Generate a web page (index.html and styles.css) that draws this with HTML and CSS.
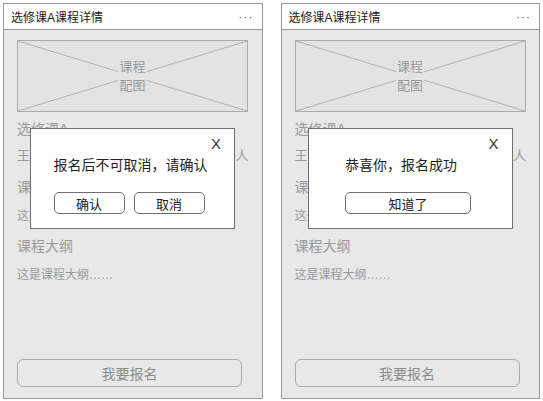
FILE: index.html
```html
<!DOCTYPE html>
<html lang="zh-CN">
<head>
    <meta charset="UTF-8">
    <meta name="viewport" content="width=device-width, initial-scale=1.0">
    <title>选修课A课程详情</title>
    <link rel="stylesheet" href="styles.css">
</head>
<body>
    <!-- Screen 1: confirm before enrolling -->
    <div class="phone">
        <div class="phone-header">
            <span class="phone-title">选修课A课程详情</span>
            <span class="phone-more">···</span>
        </div>
        <div class="phone-content">
            <div class="cover">
                <svg class="cover-cross" viewBox="0 0 229 70" preserveAspectRatio="none">
                    <line x1="0" y1="0" x2="229" y2="70"></line>
                    <line x1="229" y1="0" x2="0" y2="70"></line>
                </svg>
                <span class="cover-label">课程<br>配图</span>
            </div>
            <div class="course-name">选修课A</div>
            <div class="course-meta">
                <span>王老师</span>
                <span>已报名30人</span>
            </div>
            <div class="section-title">课程简介</div>
            <div class="section-text">这是课程简介……</div>
            <div class="section-title">课程大纲</div>
            <div class="section-text">这是课程大纲……</div>
            <div class="enroll-btn">我要报名</div>
        </div>

        <div class="dialog">
            <span class="dialog-close">X</span>
            <div class="dialog-body">
                <div class="dialog-group">
                    <p class="dialog-text">报名后不可取消，请确认</p>
                    <div class="dialog-actions">
                        <span class="dialog-btn">确认</span>
                        <span class="dialog-btn">取消</span>
                    </div>
                </div>
            </div>
        </div>
    </div>

    <!-- Screen 2: enroll succeeded -->
    <div class="phone">
        <div class="phone-header">
            <span class="phone-title">选修课A课程详情</span>
            <span class="phone-more">···</span>
        </div>
        <div class="phone-content">
            <div class="cover">
                <svg class="cover-cross" viewBox="0 0 229 70" preserveAspectRatio="none">
                    <line x1="0" y1="0" x2="229" y2="70"></line>
                    <line x1="229" y1="0" x2="0" y2="70"></line>
                </svg>
                <span class="cover-label">课程<br>配图</span>
            </div>
            <div class="course-name">选修课A</div>
            <div class="course-meta">
                <span>王老师</span>
                <span>已报名30人</span>
            </div>
            <div class="section-title">课程简介</div>
            <div class="section-text">这是课程简介……</div>
            <div class="section-title">课程大纲</div>
            <div class="section-text">这是课程大纲……</div>
            <div class="enroll-btn">我要报名</div>
        </div>

        <div class="dialog">
            <span class="dialog-close">X</span>
            <div class="dialog-body">
                <div class="dialog-group">
                    <p class="dialog-text">恭喜你，报名成功</p>
                    <div class="dialog-actions">
                        <span class="dialog-btn dialog-btn-wide">知道了</span>
                    </div>
                </div>
            </div>
        </div>
    </div>
</body>
</html>
```

FILE: styles.css
```css
/* Base */
* {
    margin: 0;
    padding: 0;
    box-sizing: border-box;
}

body {
    background-color: #ffffff;
    font-family: "Liberation Sans", "Noto Sans CJK SC", sans-serif;
    display: flex;
    gap: 18px;
    padding: 3px;
}

/* Phone frame */
.phone {
    position: relative;
    width: 260px;
    height: 396px;
    border: 1px solid #9a9a9a;
    background-color: #e8e8e8;
    display: flex;
    flex-direction: column;
}

.phone-header {
    height: 26px;
    background-color: #ffffff;
    border-bottom: 1px solid #9a9a9a;
    display: flex;
    justify-content: space-between;
    align-items: center;
    padding: 0 8px 0 7px;
    color: #222;
}

.phone-title {
    font-size: 12px;
}

.phone-more {
    font-size: 12px;
    color: #666;
    letter-spacing: 1px;
}

/* Page body */
.phone-content {
    flex: 1;
    display: flex;
    flex-direction: column;
    padding: 10px 13px 0;
    color: #9a9a9a;
}

.cover {
    position: relative;
    width: 231px;
    height: 72px;
    border: 1px solid #ababab;
    background-color: #e3e3e3;
    display: flex;
    align-items: center;
    justify-content: center;
}

.cover-cross {
    position: absolute;
    top: 0;
    left: 0;
    width: 100%;
    height: 100%;
}

.cover-cross line {
    stroke: #b0b0b0;
    stroke-width: 1;
}

.cover-label {
    position: relative;
    font-size: 13px;
    line-height: 19px;
    text-align: center;
    background-color: #e3e3e3;
    padding: 0 1px;
}

.course-name {
    font-size: 14px;
    line-height: 20px;
    margin-top: 7px;
}

.course-meta {
    display: flex;
    justify-content: space-between;
    font-size: 13px;
    line-height: 18px;
    margin-top: 8px;
}

.section-title {
    font-size: 14px;
    line-height: 20px;
    margin-top: 12px;
}

.section-text {
    font-size: 12px;
    line-height: 18px;
    margin-top: 4px;
}

.section-title + .section-text {
    margin-top: 10px;
}

.section-text + .section-title {
    margin-top: 11px;
}

.enroll-btn {
    margin-top: auto;
    margin-bottom: 11px;
    width: 225px;
    height: 28px;
    border: 1px solid #ababab;
    border-radius: 6px;
    display: flex;
    align-items: center;
    justify-content: center;
    font-size: 14px;
    color: #8c8c8c;
}

/* Modal dialog */
.dialog {
    position: absolute;
    top: 124px;
    left: 26px;
    width: 205px;
    height: 101px;
    background-color: #ffffff;
    border: 1px solid #6e6e6e;
    color: #222;
}

.dialog-close {
    position: absolute;
    top: 6px;
    right: 13px;
    font-size: 15px;
    color: #333;
}

.dialog-body {
    display: flex;
    justify-content: center;
    padding: 26px 4px 0 0;
}

.dialog-group {
    display: flex;
    flex-direction: column;
    align-items: flex-start;
}

.dialog-text {
    font-size: 14px;
    line-height: 20px;
}

.dialog-actions {
    display: flex;
    gap: 9px;
    margin-top: 17px;
}

.dialog-btn {
    width: 71px;
    height: 22px;
    border: 1px solid #6e6e6e;
    border-radius: 5px;
    display: flex;
    align-items: center;
    justify-content: center;
    font-size: 13px;
}

.dialog-btn-wide {
    width: 126px;
}
```
